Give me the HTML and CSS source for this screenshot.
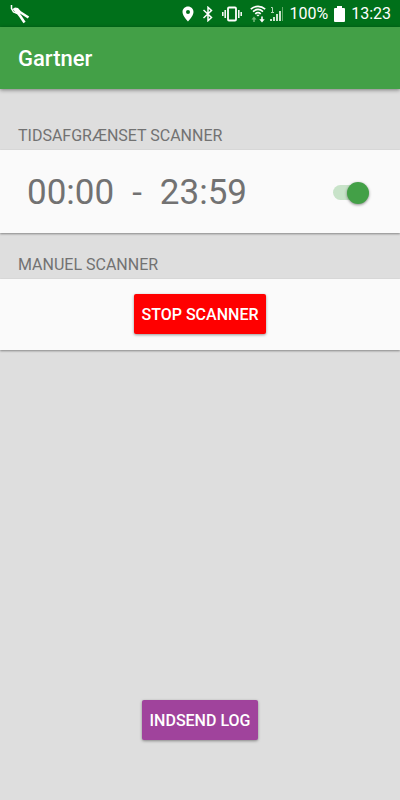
FILE: index.html
```html
<!DOCTYPE html>
<html lang="da">
<head>
<meta charset="utf-8">
<meta name="viewport" content="width=device-width, initial-scale=1">
<title>Gartner</title>
<link rel="stylesheet" href="styles.css">
</head>
<body>
<div class="status">
  <svg class="pliers" width="20" height="20" viewBox="0 0 20 20" fill="none" stroke="#fff" aria-hidden="true">
    <path d="M1.500 1v3.500l2 3.500 4 1.500" stroke-width="1.500"/>
    <path d="M2.500 5l2.500-1.500 3 .5 2.500 3-1.500 3-3-1z" fill="#fff" stroke="none"/>
    <path d="M7.500 6.500l11 7M7 8l3.500 4.500 4 6" stroke-width="2.600"/>
  </svg>
  <svg class="pin" width="12" height="16" viewBox="0 0 12 16" aria-hidden="true">
    <path fill="#fff" fill-rule="evenodd" d="M6 .5C2.900.5.5 2.900.5 6c0 4 5.500 9.500 5.500 9.500S11.500 10 11.500 6C11.500 2.900 9.100.5 6 .5zM6 4a2 2 0 1 1 0 4 2 2 0 0 1 0-4z"/>
  </svg>
  <svg class="bluetooth" width="10" height="16" viewBox="0 0 10 16" fill="none" stroke="#fff" stroke-width="1.500" aria-hidden="true">
    <path d="M.5 4l8 7.500L5 14.700V1.300l3.500 3.200-8 7.500"/>
  </svg>
  <svg class="vibrate" width="20" height="16" viewBox="0 0 20 16" fill="none" stroke="#fff" aria-hidden="true">
    <path d="M.8 6v4M3.200 4v8M16.800 4v8M19.200 6v4" stroke-width="1.500"/>
    <rect x="6" y="1.500" width="8" height="13" rx="1" stroke-width="1.800"/>
  </svg>
  <svg class="wifi" width="16" height="18" viewBox="0 0 16 18" fill="none" stroke="#fff" stroke-width="1.600" aria-hidden="true">
    <path d="M.8 4.200c4.200-3.800 10.200-3.800 14.400 0M3 6.600c3-2.600 7-2.600 10 0M5.200 8.800c1.700-1.400 3.900-1.400 5.600 0"/>
    <path d="M6.200 9.800h3.600L8 11.600z" fill="#fff" stroke="none"/>
    <path d="M4 17v-4" stroke="#78b87d" stroke-width="1.500"/>
    <path d="M1.500 14.500L4 11.500l2.500 3z" fill="#78b87d" stroke="none"/>
    <path d="M12 11.500v4"/>
    <path d="M9.300 14.200h5.400L12 17.500z" fill="#fff" stroke="none"/>
  </svg>
  <svg class="signal" width="13" height="16" viewBox="0 0 13 16" aria-hidden="true">
    <path fill="none" stroke="#b4d8b7" d="M1 1.500h1.500V6M1 6.500h3"/>
    <path fill="#cce4ce" d="M0 13h2v2H0zM3 11h2v4H3zM6 8h2v7H6zM9 5h2v10H9z"/>
    <path fill="#65aa6a" d="M12 1h1v14h-1z"/>
  </svg>
  <span class="percent">100%</span>
  <svg class="battery" width="11" height="16" viewBox="0 0 11 16" aria-hidden="true">
    <path fill="#fff" d="M3 0h5v2h2a1 1 0 0 1 1 1v12a1 1 0 0 1-1 1H1a1 1 0 0 1-1-1V3a1 1 0 0 1 1-1h2z"/>
  </svg>
  <span>13:23</span>
</div>
<header class="appbar"><h1>Gartner</h1></header>
<main>
  <h2 id="timed">TIDSAFGRÆNSET SCANNER</h2>
  <section class="card timed">
    <div class="range"><time>00:00</time><span>-</span><time>23:59</time></div>
    <input class="switch" type="checkbox" role="switch" aria-labelledby="timed" checked>
  </section>
  <h2 class="manual-title">MANUEL SCANNER</h2>
  <section class="card manual">
    <button class="btn stop" type="button">STOP SCANNER</button>
  </section>
  <footer><button class="btn log" type="button">INDSEND LOG</button></footer>
</main>
</body>
</html>
```
FILE: styles.css
```css
* { box-sizing: border-box; }
body {
  margin: 0;
  min-height: 100vh;
  display: flex;
  flex-direction: column;
  background: #dedede;
  color: #727272;
  font-family: Roboto, sans-serif;
}
.status {
  display: flex;
  align-items: center;
  padding: 1px 9px 0 10px;
  background: #00701a;
  color: #fff;
  font-size: 16px;
  line-height: 26px;
}
.status svg { flex: none; }
.pliers { margin-right: auto; }
.pin, .bluetooth { margin-right: 9px; }
.vibrate { margin-right: 8px; }
.wifi { margin-right: 4px; }
.signal, .percent { margin-right: 6px; }
.battery { margin-right: 6px; }
.appbar {
  position: relative;
  padding: 18px 18px 16px;
  background: #43a047;
  color: #fff;
  box-shadow: 0 1px 4px rgba(0, 0, 0, .45);
}
h1 {
  margin: 0;
  font-size: 22px;
  font-weight: 500;
  line-height: 28px;
}
main {
  flex: 1;
  display: flex;
  flex-direction: column;
}
h2 {
  margin: 0;
  padding: 37px 18px 4px;
  font-size: 16px;
  font-weight: 400;
  line-height: 20px;
}
.manual-title { padding-top: 22px; }
.card {
  display: flex;
  align-items: center;
  background: #fafafa;
  box-shadow: 0 1px 2px rgba(0, 0, 0, .4);
}
.timed {
  justify-content: space-between;
  padding: 22px 31px 19px 27px;
}
.range {
  display: flex;
  gap: 18px;
  font-size: 35px;
  line-height: 42px;
}
.switch {
  appearance: none;
  position: relative;
  width: 36px;
  height: 22px;
  margin: 0;
}
.switch::before, .switch::after {
  content: "";
  position: absolute;
}
.switch::before {
  inset: 3px 4px 4px 0;
  border-radius: 8px;
  background: #c8e3c9;
}
.switch::after {
  top: 0;
  right: 0;
  width: 22px;
  height: 22px;
  border-radius: 50%;
  background: #43a047;
  box-shadow: 0 1px 3px rgba(0, 0, 0, .45);
}
.switch:not(:checked)::before { background: #bdbdbd; }
.switch:not(:checked)::after { right: 14px; background: #fafafa; }
.manual {
  justify-content: center;
  padding: 15px 16px 16px;
}
.btn {
  border: 0;
  border-radius: 2px;
  padding: 11px 8px 9px;
  color: #fff;
  font: 500 16px/20px Roboto, sans-serif;
  box-shadow: 0 1px 3px rgba(0, 0, 0, .4);
}
.stop { background: #f00; }
.log { background: #a0439c; }
footer {
  display: flex;
  justify-content: center;
  margin-top: auto;
  padding: 16px 16px 60px;
}
```
